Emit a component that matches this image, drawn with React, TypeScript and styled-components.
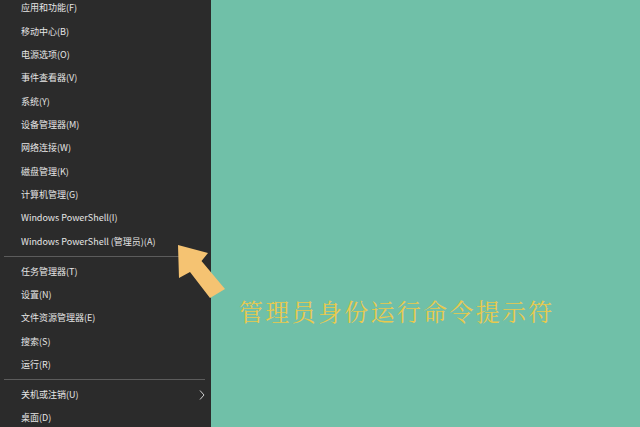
import React from "react";
import styled, { createGlobalStyle } from "styled-components";

const Global = createGlobalStyle`
  html, body { margin: 0; padding: 0; width: 640px; height: 427px; overflow: hidden; }
  body { font-family: "Noto Sans CJK SC", "Noto Sans", sans-serif; }
`;

const Page = styled.div`
  position: relative;
  width: 640px;
  height: 427px;
  display: flex;
  overflow: hidden;
  background: #70c0a8;
`;

const Menu = styled.div`
  width: 211px;
  flex: none;
  background: #2b2b2b;
  display: flex;
  flex-direction: column;
  overflow: hidden;
`;

const List = styled.div`
  display: flex;
  flex-direction: column;
  margin-top: -3.7px;
`;

const Item = styled.div`
  height: 23.33px;
  display: flex;
  align-items: center;
  justify-content: space-between;
  padding: 0 6px 0 21px;
  color: #e6e6e6;
  font-family: "Noto Sans CJK SC", "Noto Sans", sans-serif;
  font-size: 9px;
  line-height: 1;
  white-space: nowrap;
`;

const Separator = styled.div`
  height: 6.67px;
  display: flex;
  align-items: center;
  padding: 0 6px 0 4px;
  &::after {
    content: "";
    flex: 1;
    height: 1px;
    background: #5c5c5c;
  }
`;

const Panel = styled.div`
  flex: 1;
  display: flex;
  flex-direction: column;
  padding: 295px 0 0 28px;
`;

const Title = styled.div`
  font-family: "Noto Serif CJK SC", "Noto Sans CJK SC", serif;
  font-size: 24px;
  letter-spacing: 2.3px;
  color: #e8c94e;
  line-height: 32px;
  white-space: nowrap;
`;

const ArrowSvg = styled.svg`
  position: absolute;
  left: 0;
  top: 0;
  pointer-events: none;
`;

const group1 = [
  "应用和功能(F)",
  "移动中心(B)",
  "电源选项(O)",
  "事件查看器(V)",
  "系统(Y)",
  "设备管理器(M)",
  "网络连接(W)",
  "磁盘管理(K)",
  "计算机管理(G)",
  "Windows PowerShell(I)",
  "Windows PowerShell (管理员)(A)",
];

const group2 = ["任务管理器(T)", "设置(N)", "文件资源管理器(E)", "搜索(S)", "运行(R)"];

export default function App() {
  return (
    <>
      <Global />
      <Page>
        <Menu>
          <List>
            {group1.map((t) => (
              <Item key={t}>{t}</Item>
            ))}
            <Separator />
            {group2.map((t) => (
              <Item key={t}>{t}</Item>
            ))}
            <Separator />
            <Item>
              关机或注销(U)
              <svg width="6" height="10" viewBox="0 0 6 10">
                <polyline points="1,0.5 5,5 1,9.5" fill="none" stroke="#cfcfcf" strokeWidth="1" />
              </svg>
            </Item>
            <Item>桌面(D)</Item>
          </List>
        </Menu>
        <Panel>
          <Title>管理员身份运行命令提示符</Title>
        </Panel>
        <ArrowSvg width="640" height="427" viewBox="0 0 640 427">
          <polygon
            points="178,245 208,253 201.5,261 225,289 210,298 190,272 179,278"
            fill="#f5c372"
          />
        </ArrowSvg>
      </Page>
    </>
  );
}
